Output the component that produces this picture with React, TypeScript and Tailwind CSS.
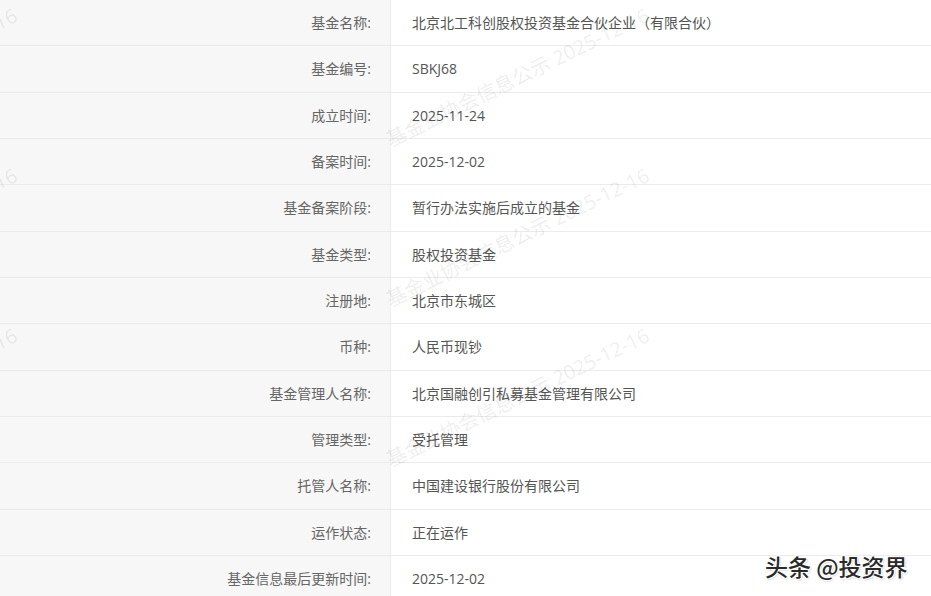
import React from "react";

const rows: [string, string][] = [
  ["基金名称:", "北京北工科创股权投资基金合伙企业（有限合伙）"],
  ["基金编号:", "SBKJ68"],
  ["成立时间:", "2025-11-24"],
  ["备案时间:", "2025-12-02"],
  ["基金备案阶段:", "暂行办法实施后成立的基金"],
  ["基金类型:", "股权投资基金"],
  ["注册地:", "北京市东城区"],
  ["币种:", "人民币现钞"],
  ["基金管理人名称:", "北京国融创引私募基金管理有限公司"],
  ["管理类型:", "受托管理"],
  ["托管人名称:", "中国建设银行股份有限公司"],
  ["运作状态:", "正在运作"],
  ["基金信息最后更新时间:", "2025-12-02"],
];

const marks: [number, number][] = [
  [392, 150],
  [392, 310],
  [392, 470],
  [-240, 150],
  [-240, 310],
  [-240, 470],
];

export default function App() {
  return (
    <div
      className="relative w-[931px] h-[596px] overflow-hidden bg-white text-[14px]"
      style={{ fontFamily: '"Open Sans", "Noto Sans CJK SC", sans-serif' }}
    >
      <div className="flex flex-col">
        {rows.map(([k, v], i) => (
          <div key={i} className="flex h-[46.33px] shrink-0 border-b border-[#ebebeb]">
            <div className="w-[391px] shrink-0 bg-[#f7f7f7] border-r border-[#ececec] flex items-center justify-end pr-[19px] text-[#666]">
              {k}
            </div>
            <div className="flex-1 flex items-center pl-[21px] text-[#555]">{v}</div>
          </div>
        ))}
      </div>
      {marks.map(([x, y], i) => (
        <div
          key={i}
          className="absolute pointer-events-none whitespace-nowrap text-[20px] leading-[20px] text-[rgba(0,0,0,0.085)] origin-bottom-left"
          style={{ left: x, top: y - 20, transform: "rotate(-26deg)" }}
        >
          基金业协会信息公示 2025-12-16
        </div>
      ))}
      <div
        className="absolute left-[765px] top-[551px] text-[23px] leading-[30px] font-medium text-[#2a2a2a] pointer-events-none"
        style={{
          fontFamily: '"Noto Sans CJK SC", sans-serif',
          textShadow: "1px 1px 0 #fff, -1px -1px 0 #fff, 1px -1px 0 #fff, -1px 1px 0 #fff, 1px 1px 2px #999",
        }}
      >
        头条 @投资界
      </div>
    </div>
  );
}
